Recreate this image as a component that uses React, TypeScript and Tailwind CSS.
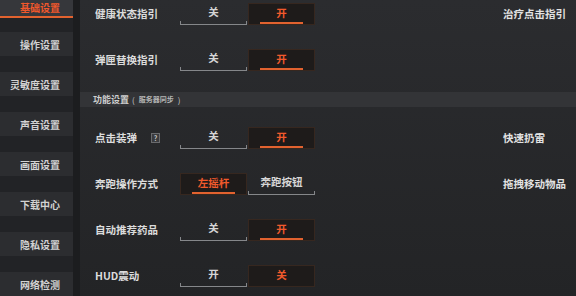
import { FC } from "react";

// Sidebar menu entries
const menu = ["基础设置", "操作设置", "灵敏度设置", "声音设置", "画面设置", "下载中心", "隐私设置", "网络检测"];

interface SegProps {
  text: string;
  active?: boolean;
  bar?: boolean;
}

const Segment: FC<SegProps> = ({ text, active, bar = true }) => {
  if (active) {
    return (
      <div className="flex h-[22px] w-[67px] flex-col items-center border border-[#36271f] bg-[#1e1b1a]">
        <span className="flex flex-1 items-center text-[10.5px] font-bold text-[#f25a2c]">{text}</span>
        {bar ? <span className="h-[2px] w-[43px] bg-[#e2622f]" /> : <span className="h-[2px]" />}
      </div>
    );
  }
  return (
    <div className="flex h-[22px] w-[67px] flex-col">
      <span className="flex flex-1 items-center justify-center text-[10.5px] font-bold text-[#d6d6d6]">{text}</span>
      <span className="h-[4px] border-x border-b border-[#85878a]" />
    </div>
  );
};

interface RowProps {
  label: string;
  left: string;
  right: string;
  activeLeft?: boolean;
  extra?: string;
  help?: boolean;
  bar?: boolean;
}

const Row: FC<RowProps> = ({ label, left, right, activeLeft, extra, help, bar = true }) => (
  <div className="flex h-[22px] items-center">
    <div className="flex w-[100px] items-center pl-[15px] text-[10.5px] font-bold text-[#dcdcdc]">
      <span>{label}</span>
      {help && (
        <span className="ml-[14px] flex h-[10px] w-[9px] items-center justify-center border border-[#6a6b6e] bg-[#3a3b3e] text-[7px] leading-none text-[#c8c8c8]">
          ?
        </span>
      )}
    </div>
    <div className="flex gap-[1px]">
      <Segment text={left} active={activeLeft} bar={bar} />
      <Segment text={right} active={!activeLeft} bar={bar} />
    </div>
    <div className="flex-1" />
    <div className="w-[73px] text-[10.5px] font-bold text-[#e2e2e2]">{extra}</div>
  </div>
);

export default function App() {
  return (
    <div className="flex h-[296px] w-[576px] overflow-hidden bg-[#26272a] font-['Noto_Sans_CJK_SC','Noto_Sans',sans-serif]">
      {/* Sidebar */}
      <aside className="flex w-[73px] flex-col bg-[#222326]">
        <div className="-mt-[2px] flex h-[26px] items-center justify-end border-b-2 border-[#e2622f] bg-[#36373b] pr-[13px] text-[10px] font-bold text-[#f0582c]">
          {menu[0]}
        </div>
        <div className="mt-[14px] flex flex-col gap-[16px]">
          {menu.slice(1).map((m) => (
            <div
              key={m}
              className="flex h-[24px] items-center justify-end bg-[#2c2d30] pr-[13px] text-[10px] font-bold text-[#d2d2d2]"
            >
              {m}
            </div>
          ))}
        </div>
      </aside>
      <div className="w-[7px] bg-[#1c1d1f]" />

      {/* Content */}
      <main className="flex flex-1 flex-col bg-gradient-to-b from-[#2b2c2f] to-[#232426] pt-[3px]">
        <Row label="健康状态指引" left="关" right="开" extra="治疗点击指引" />
        <div className="mt-[24px]">
          <Row label="弹匣替换指引" left="关" right="开" />
        </div>
        <div className="mt-[21px] flex h-[15px] items-center bg-[#333437] pl-[13px] text-[#cfcfcf]">
          <span className="text-[9px] font-bold">功能设置</span>
          <span className="ml-[3px] text-[8px]">(</span>
          <span className="mx-[4px] text-[7px] font-bold text-[#b4b4b4]">服务器同步</span>
          <span className="text-[8px]">)</span>
        </div>
        <div className="mt-[20px]">
          <Row label="点击装弹" left="关" right="开" help extra="快速扔雷" />
        </div>
        <div className="mt-[24px]">
          <Row label="奔跑操作方式" left="左摇杆" right="奔跑按钮" activeLeft extra="拖拽移动物品" />
        </div>
        <div className="mt-[24px]">
          <Row label="自动推荐药品" left="关" right="开" />
        </div>
        <div className="mt-[24px]">
          <Row label="HUD震动" left="开" right="关" bar={false} />
        </div>
      </main>
    </div>
  );
}
